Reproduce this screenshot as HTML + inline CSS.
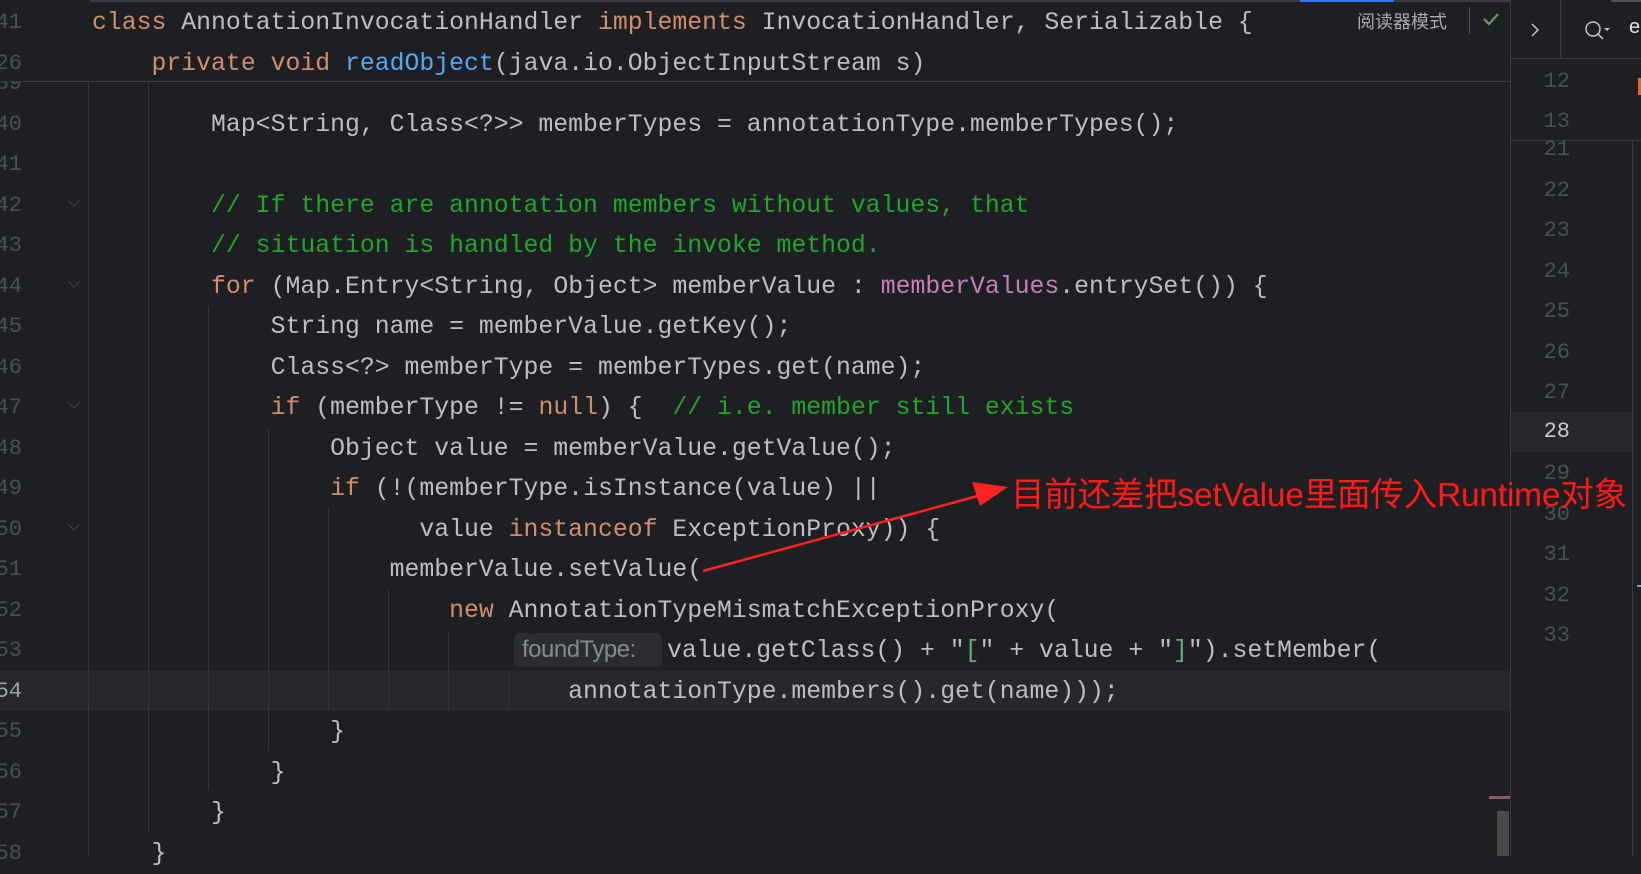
<!DOCTYPE html>
<html><head><meta charset="utf-8"><style>
*{margin:0;padding:0;box-sizing:border-box}
body{width:1641px;height:856px;overflow:hidden;background:#1e1f22;position:relative;font-family:"Liberation Mono",monospace;color:#bcbec4}
.ln{position:absolute;left:-30px;width:52px;text-align:right;font-size:22px;color:#4b5059;height:40.5px;line-height:40.5px}
.cd{position:absolute;left:92px;font-size:24.8px;white-space:pre;height:40.5px;line-height:40.5px}
.k{color:#cf8e6d}.f{color:#56a8f5}.c{color:#22a52c}.p{color:#c77dbb}.s{color:#6aab73}
.g{position:absolute;width:1px;background:#34363b}
.fold{position:absolute;left:69px;width:10px;height:10px;border-right:1.5px solid #4b5059;border-bottom:1.5px solid #4b5059;transform:rotate(45deg) scale(.8,.8)}
.rn{position:absolute;left:1530px;width:40px;text-align:right;font-size:22px;color:#4b5059;height:40.5px;line-height:40.5px}
</style></head><body>
<div style="position:absolute;left:0;top:671px;width:1510px;height:40px;background:#26282e"></div>
<div class="g" style="left:88px;top:82px;height:774px"></div>
<div class="g" style="left:148px;top:82px;height:750px"></div>
<div class="g" style="left:208px;top:306px;height:484px"></div>
<div class="g" style="left:268px;top:428px;height:323px"></div>
<div class="g" style="left:328px;top:509px;height:200px"></div>
<div class="g" style="left:388px;top:590px;height:120px"></div>
<div class="g" style="left:448px;top:631px;height:79px"></div>
<div class="g" style="left:508px;top:671px;height:39px"></div>

<div class="ln" style="top:64px">39</div>
<div class="ln" style="top:104.75px">40</div>
<div class="ln" style="top:145.25px">41</div>
<div class="ln" style="top:185.75px">42</div>
<div class="ln" style="top:226.25px">43</div>
<div class="ln" style="top:266.75px">44</div>
<div class="ln" style="top:307.25px">45</div>
<div class="ln" style="top:347.75px">46</div>
<div class="ln" style="top:388.25px">47</div>
<div class="ln" style="top:428.75px">48</div>
<div class="ln" style="top:469.25px">49</div>
<div class="ln" style="top:509.75px">50</div>
<div class="ln" style="top:550.25px">51</div>
<div class="ln" style="top:590.75px">52</div>
<div class="ln" style="top:631.25px">53</div>
<div class="ln" style="top:671.75px;color:#a1a3ab">54</div>
<div class="ln" style="top:712.25px">55</div>
<div class="ln" style="top:752.75px">56</div>
<div class="ln" style="top:793.25px">57</div>
<div class="ln" style="top:833.75px">58</div>
<div class="fold" style="top:196px"></div>
<div class="fold" style="top:277px"></div>
<div class="fold" style="top:398px"></div>
<div class="fold" style="top:520px"></div>

<div class="cd" style="top:104.75px">        Map&lt;String, Class&lt;?&gt;&gt; memberTypes = annotationType.memberTypes();</div>
<div class="cd c" style="top:185.75px">        // If there are annotation members without values, that</div>
<div class="cd c" style="top:226.25px">        // situation is handled by the invoke method.</div>
<div class="cd" style="top:266.75px">        <span class="k">for</span> (Map.Entry&lt;String, Object&gt; memberValue : <span class="p">memberValues</span>.entrySet()) {</div>
<div class="cd" style="top:307.25px">            String name = memberValue.getKey();</div>
<div class="cd" style="top:347.75px">            Class&lt;?&gt; memberType = memberTypes.get(name);</div>
<div class="cd" style="top:388.25px">            <span class="k">if</span> (memberType != <span class="k">null</span>) {  <span class="c">// i.e. member still exists</span></div>
<div class="cd" style="top:428.75px">                Object value = memberValue.getValue();</div>
<div class="cd" style="top:469.25px">                <span class="k">if</span> (!(memberType.isInstance(value) ||</div>
<div class="cd" style="top:509.75px">                      value <span class="k">instanceof</span> ExceptionProxy)) {</div>
<div class="cd" style="top:550.25px">                    memberValue.setValue(</div>
<div class="cd" style="top:590.75px">                        <span class="k">new</span> AnnotationTypeMismatchExceptionProxy(</div>
<div style="position:absolute;left:514px;top:633px;width:148px;height:34px;background:#2b2d30;border-radius:5px;color:#868a91;font-family:'Liberation Sans',sans-serif;font-size:24px;line-height:34px;padding-left:8px;letter-spacing:-0.5px">foundType:</div>
<div class="cd" style="left:667px;top:631.25px">value.getClass() + "<span class="s">[</span>" + value + "<span class="s">]</span>").setMember(</div>
<div class="cd" style="top:671.75px">                                annotationType.members().get(name)));</div>
<div class="cd" style="top:712.25px">                }</div>
<div class="cd" style="top:752.75px">            }</div>
<div class="cd" style="top:793.25px">        }</div>
<div class="cd" style="top:833.75px">    }</div>

<div style="position:absolute;left:0;top:0;width:1510px;height:82px;background:#1e1f22;border-bottom:1px solid #393b40"></div>
<div style="position:absolute;left:90px;top:0;width:1420px;height:2px;background:#393b40"></div>
<div style="position:absolute;left:1300px;top:0;width:94px;height:2px;background:#3574f0"></div>
<div class="ln" style="top:3px">41</div>
<div class="ln" style="top:44px">26</div>
<div class="cd" style="top:3px"><span class="k">class</span> AnnotationInvocationHandler <span class="k">implements</span> InvocationHandler, Serializable {</div>
<div class="cd" style="top:44px">    <span class="k">private void</span> <span class="f">readObject</span>(java.io.ObjectInputStream s)</div>
<div style="position:absolute;left:1357px;top:8px;font-family:'Liberation Sans','Noto Sans CJK SC',sans-serif;font-size:18px;color:#a8abb0">阅读器模式</div>
<div style="position:absolute;left:1469px;top:7px;width:1px;height:27px;background:#4e5157"></div>
<svg style="position:absolute;left:1482px;top:11px" width="18" height="16"><path d="M2 8 L7 13 L16 3" fill="none" stroke="#5fa05f" stroke-width="2.2"/></svg>

<div style="position:absolute;left:1489px;top:796px;width:21px;height:3px;background:#8a5968"></div>
<div style="position:absolute;left:1497px;top:811px;width:12px;height:45px;background:#4a4a4a"></div>

<div style="position:absolute;left:1510px;top:0;width:131px;height:856px;background:#1e1f22;border-left:1px solid #393b40"></div>
<div style="position:absolute;left:1511px;top:412px;width:121px;height:40px;background:#26282e"></div>
<div style="position:absolute;left:1511px;top:58px;width:130px;height:1px;background:#393b40"></div>
<div style="position:absolute;left:1560px;top:0;width:1px;height:58px;background:#393b40"></div>
<div style="position:absolute;left:1511px;top:140px;width:130px;height:1px;background:#393b40"></div>
<div style="position:absolute;left:1632px;top:141px;width:1px;height:715px;background:#393b40"></div>
<div style="position:absolute;left:1611px;top:0;width:30px;height:2px;background:#4e5157"></div>
<svg style="position:absolute;left:1530px;top:22px" width="10" height="16"><path d="M2 2 L8 8 L2 14" fill="none" stroke="#c0c2c8" stroke-width="1.5"/></svg>
<svg style="position:absolute;left:1583px;top:18px" width="30" height="24"><circle cx="10" cy="11" r="7" fill="none" stroke="#c0c2c8" stroke-width="1.5"/><path d="M15 16 L20 21" stroke="#c0c2c8" stroke-width="1.6"/><path d="M21 10 L27 10 L24 13Z" fill="#c0c2c8"/></svg>
<div style="position:absolute;left:1629px;top:16px;font-family:'Liberation Sans',sans-serif;font-size:20px;color:#dfe1e5">e</div>
<div style="position:absolute;left:1638px;top:78px;width:3px;height:17px;background:#d46a3a"></div>
<div class="rn" style="top:62px">12</div>
<div class="rn" style="top:102px">13</div>
<div class="rn" style="top:130px">21</div>
<div class="rn" style="top:170.5px">22</div>
<div class="rn" style="top:211px">23</div>
<div class="rn" style="top:251.5px">24</div>
<div class="rn" style="top:292px">25</div>
<div class="rn" style="top:332.5px">26</div>
<div class="rn" style="top:373px">27</div>
<div class="rn" style="top:412px;color:#c8cad0">28</div>
<div class="rn" style="top:454px">29</div>
<div class="rn" style="top:494.5px">30</div>
<div class="rn" style="top:535px">31</div>
<div class="rn" style="top:575.5px">32</div>
<div class="rn" style="top:616px">33</div>
<div style="position:absolute;left:1637px;top:585px;width:4px;height:2px;background:#8ea0c8"></div>

<svg style="position:absolute;left:0;top:0" width="1641" height="856">
<path d="M703 571 L985 494" stroke="#f22" stroke-width="2.5"/>
<path d="M1008 487 L972 482 L980 506 Z" fill="#f22"/>
</svg>
<div style="position:absolute;left:1011px;top:467px;font-family:'Liberation Sans','Noto Sans CJK SC',sans-serif;font-size:33.5px;color:#ff1a1a;white-space:nowrap;letter-spacing:-0.2px">目前还差把setValue里面传入Runtime对象</div>
</body></html>
